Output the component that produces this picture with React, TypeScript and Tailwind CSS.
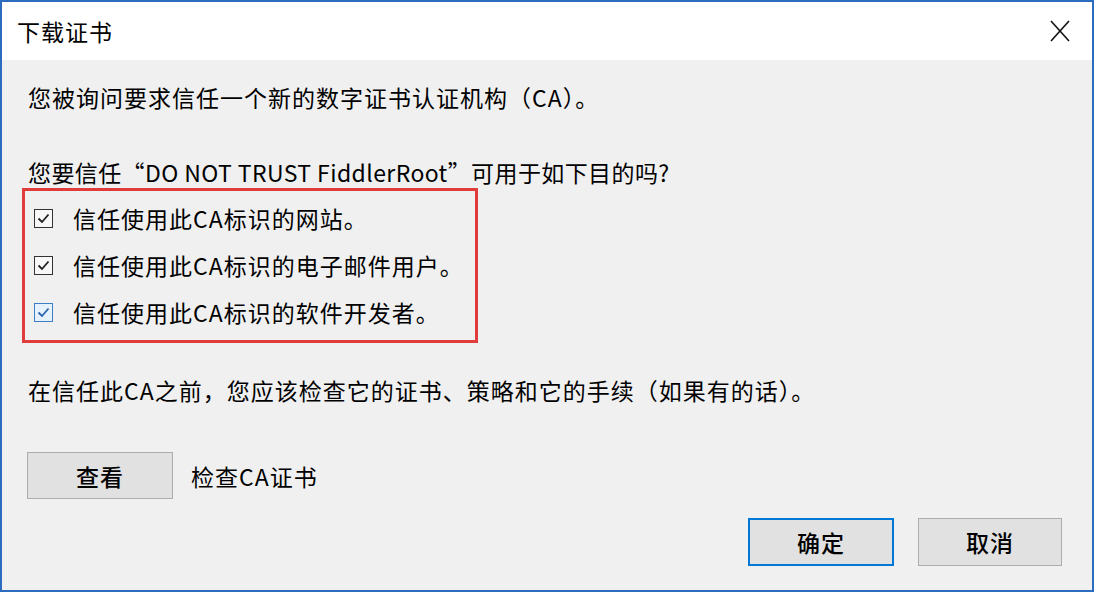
import React from "react";

function Check({ hover = false }: { hover?: boolean }) {
  return (
    <div
      className={
        hover
          ? "w-[19px] h-[19px] border border-[#3c7fc4] bg-[#e5f1fb] flex items-center justify-center shrink-0"
          : "w-[19px] h-[19px] border border-[#333333] bg-[#f8f8f8] flex items-center justify-center shrink-0"
      }
    >
      <svg width="15" height="15" viewBox="0 0 15 15">
        <polyline
          points="2.5,7.5 6,11 12.5,3.5"
          fill="none"
          stroke={hover ? "#2a66b0" : "#222222"}
          strokeWidth="1.8"
        />
      </svg>
    </div>
  );
}

export default function App() {
  const font = {
    fontFamily: '"Noto Sans CJK SC", "Microsoft YaHei", sans-serif',
  };
  return (
    <div
      className="w-[1094px] h-[592px] border-2 border-[#2c6cc0] bg-[#f0f0f0] flex flex-col text-black text-[23px] leading-[30px] tracking-[1px]"
      style={font}
    >
      <div className="h-[58px] bg-white flex items-center justify-between pl-[15px] pr-[22px] shrink-0">
        <span className="text-[23px]">下载证书</span>
        <svg width="20" height="22" viewBox="0 0 20 22">
          <line x1="1" y1="1" x2="19" y2="21" stroke="#111" strokeWidth="1.6" />
          <line x1="19" y1="1" x2="1" y2="21" stroke="#111" strokeWidth="1.6" />
        </svg>
      </div>
      <div className="flex-1 flex flex-col">
        <div className="mt-[22px] ml-[26px] h-[30px]">
          您被询问要求信任一个新的数字证书认证机构（CA）。
        </div>
        <div className="mt-[45px] ml-[26px] h-[30px] tracking-[0.4px]">
          您要信任“DO NOT TRUST FiddlerRoot”可用于如下目的吗?
        </div>
        <div className="mt-[1px] ml-[20px] w-[456px] h-[155px] border-[3px] border-[#e03c3c] flex flex-col gap-[17px] pt-[12px] pl-[9px]">
          <div className="flex items-center h-[30px] gap-[20px]">
            <Check />
            <span>信任使用此CA标识的网站。</span>
          </div>
          <div className="flex items-center h-[30px] gap-[20px]">
            <Check />
            <span>信任使用此CA标识的电子邮件用户。</span>
          </div>
          <div className="flex items-center h-[30px] gap-[20px]">
            <Check hover />
            <span>信任使用此CA标识的软件开发者。</span>
          </div>
        </div>
        <div className="mt-[32px] ml-[26px] h-[30px]">
          在信任此CA之前，您应该检查它的证书、策略和它的手续（如果有的话）。
        </div>
        <div className="mt-[47px] ml-[25px] flex items-center">
          <div className="w-[146px] h-[47px] bg-[#e1e1e1] border border-[#adadad] flex items-center justify-center font-medium">
            查看
          </div>
          <span className="ml-[18px]">检查CA证书</span>
        </div>
        <div className="mt-[19px] flex justify-end gap-[24px] pr-[30px]">
          <div className="w-[146px] h-[48px] bg-[#e1e1e1] border-2 border-[#0078d7] flex items-center justify-center font-medium">
            确定
          </div>
          <div className="w-[144px] h-[48px] bg-[#e1e1e1] border border-[#adadad] flex items-center justify-center font-medium">
            取消
          </div>
        </div>
      </div>
    </div>
  );
}
